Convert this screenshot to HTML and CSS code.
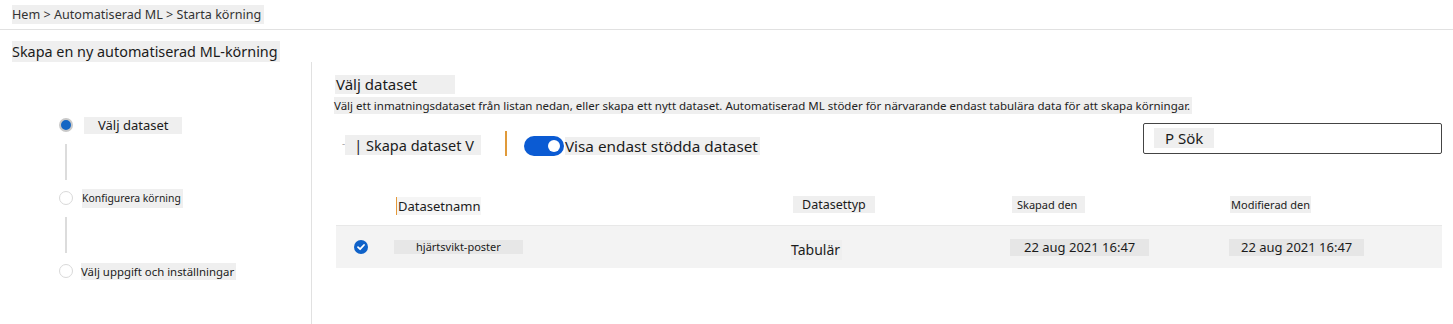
FILE: index.html
```html
<html><head>
<meta charset="utf-8">
<meta name="viewport" content="width=device-width, initial-scale=1">
<title>Starta körning - Automatiserad ML</title>
<link rel="stylesheet" href="styles.css">
</head>
<body>
  <header class="topbar">
    <span class="crumbs tx">Hem &gt; Automatiserad ML &gt; Starta körning</span>
  </header>

  <div class="page-title"><span class="tx">Skapa en ny automatiserad ML-körning</span></div>

  <div class="layout">
    <aside class="steps">
      <div class="step active">
        <span class="dot"></span>
        <span class="step-label first tx">Välj dataset</span>
      </div>
      <div class="connector"></div>
      <div class="step">
        <span class="dot"></span>
        <span class="step-label small tx">Konfigurera körning</span>
      </div>
      <div class="connector"></div>
      <div class="step">
        <span class="dot"></span>
        <span class="step-label tx">Välj uppgift och inställningar</span>
      </div>
    </aside>

    <main class="content">
      <h2 class="section-title tx">Välj dataset</h2>
      <p class="section-desc tx">Välj ett inmatningsdataset från listan nedan, eller skapa ett nytt dataset. Automatiserad ML stöder för närvarande endast tabulära data för att skapa körningar.</p>

      <div class="toolbar">
        <span class="dash">-</span>
        <span class="create tx">| Skapa dataset V</span>
        <span class="sep"></span>
        <span class="toggle"><span class="knob"></span></span>
        <span class="toggle-label tx">Visa endast stödda dataset</span>
        <div class="search"><span class="tx">P Sök</span></div>
      </div>

      <div class="table">
        <div class="row head">
          <div class="cell"></div>
          <div class="cell"><span class="col-name">Datasetnamn</span></div>
          <div class="cell"><span class="col-type tx">Datasettyp</span></div>
          <div class="cell"><span class="col-date tx">Skapad den</span></div>
          <div class="cell"><span class="col-mod tx">Modifierad den</span></div>
        </div>
        <div class="row selected">
          <div class="cell">
            <svg class="check" width="14" height="14" viewBox="0 0 14 14">
              <circle cx="7" cy="7" r="7" fill="#0f62c9"/>
              <path d="M4 7.2 L6.1 9.2 L10 5" fill="none" stroke="#fff" stroke-width="1.8" stroke-linecap="round" stroke-linejoin="round"/>
            </svg>
          </div>
          <div class="cell"><span class="ds-name">hjärtsvikt-poster</span></div>
          <div class="cell"><span class="ds-type tx">Tabulär</span></div>
          <div class="cell"><span class="ds-date first">22 aug 2021 16:47</span></div>
          <div class="cell"><span class="ds-date">22 aug 2021 16:47</span></div>
        </div>
      </div>
    </main>
  </div>
</body>
</html>
```

FILE: styles.css
```css
body, html {
  margin: 0;
  padding: 0;
  font-family: 'Noto Sans', 'Open Sans', sans-serif;
  background-color: #fff;
  color: #1b1b1b;
  overflow: hidden;
}
.tx {
  background-color: #efefef;
}
.topbar {
  height: 30px;
  box-sizing: border-box;
  padding: 5px 0 0 12px;
  border-bottom: 1px solid #e1e1e1;
}
.crumbs {
  display: inline-block;
  font-size: 12.6px;
  line-height: 19px;
  color: #333;
  padding-right: 3px;
}
.page-title {
  padding: 11px 0 0 12px;
}
.page-title .tx {
  display: inline-block;
  font-size: 14.4px;
  line-height: 21px;
  padding-right: 2px;
}
.layout {
  display: flex;
  height: 262px;
}
.steps {
  width: 312px;
  border-right: 1px solid #e1e1e1;
  padding: 53px 0 0 59px;
  box-sizing: border-box;
}
.step {
  display: flex;
  align-items: center;
  height: 20px;
}
.dot {
  width: 14px;
  height: 14px;
  border-radius: 50%;
  border: 1.5px solid #d9d9d9;
  box-sizing: border-box;
  background-color: #fff;
  flex-shrink: 0;
}
.step.active .dot {
  background-color: #1466c4;
  border: 2px solid #c9c9c9;
}
.step-label {
  font-size: 11.4px;
  line-height: 17px;
  margin-left: 8px;
  padding-right: 2px;
}
.step-label.first {
  font-size: 13px;
  margin-left: 11px;
  padding: 0 14px;
}
.step-label.small {
  font-size: 10.4px;
  line-height: 19px;
  margin-left: 9px;
}
.connector {
  width: 2px;
  height: 36px;
  margin: 9px 0 8px 6px;
  background-color: #dcdcdc;
}
.content {
  flex: 1;
  padding: 13px 11px 0 22px;
}
.section-title {
  display: block;
  width: fit-content;
  margin: 0 0 0 1px;
  font-size: 15px;
  font-weight: normal;
  line-height: 19px;
  padding: 0 38px 0 1px;
}
.section-desc {
  display: block;
  width: fit-content;
  margin: 3px 0 0;
  font-size: 11.5px;
  line-height: 17px;
  color: #222;
  padding-right: 2px;
}
.toolbar {
  display: flex;
  align-items: flex-end;
  height: 33px;
  margin-top: 9px;
}
.dash {
  font-size: 10px;
  color: #aaa;
  margin: 0 0 6px 8px;
}
.create {
  font-size: 14.5px;
  line-height: 20px;
  padding: 0 7px 0 9px;
  margin-bottom: 1px;
}
.sep {
  width: 2px;
  height: 25px;
  margin-left: 24px;
  background-color: #e09a3a;
}
.toggle {
  position: relative;
  width: 40px;
  height: 20px;
  border-radius: 10px;
  margin-left: 17px;
  background-color: #0b5bd3;
}
.knob {
  position: absolute;
  right: 4px;
  top: 4px;
  width: 12px;
  height: 12px;
  border-radius: 50%;
  background-color: #fff;
}
.toggle-label {
  font-size: 15.3px;
  line-height: 18px;
  margin: 0 0 1px 1px;
  padding-right: 2px;
}
.search {
  margin-left: auto;
  align-self: flex-start;
  width: 299px;
  height: 31px;
  box-sizing: border-box;
  border: 1px solid #444;
  border-radius: 2px;
  padding: 4px 0 0 10px;
}
.search .tx {
  display: inline-block;
  font-size: 15px;
  line-height: 20px;
  padding: 0 11px;
}
.table {
  margin: 34px 0 0 2px;
}
.row {
  display: grid;
  grid-template-columns: 53px 402px 219px 219px 1fr;
  align-items: center;
}
.row.head {
  height: 36px;
  box-sizing: border-box;
  padding-bottom: 6px;
  border-bottom: 1px solid #e8e8e8;
}
.row.selected {
  height: 42px;
  background-color: #f3f3f3;
}
.cell {
  display: flex;
  align-items: center;
}
.col-name {
  font-size: 13px;
  line-height: 18px;
  margin: 3px 0 0 7px;
  padding-left: 1px;
  border-left: 1px solid #e59a3a;
  background-color: #f5f5f5;
}
.col-type {
  font-size: 12.5px;
  line-height: 17px;
  padding: 0 9px;
  margin-left: 2px;
}
.col-date {
  font-size: 11px;
  line-height: 17px;
  margin-left: 2px;
  padding: 0 8px 0 5px;
}
.col-mod {
  font-size: 11px;
  line-height: 17px;
  margin-left: 1px;
  padding: 0 1px;
}
.check {
  margin-left: 18px;
}
.ds-name {
  font-size: 11px;
  line-height: 14px;
  padding: 0 22px;
  margin-left: 5px;
  background-color: #e7e7e7;
}
.ds-type {
  font-size: 14px;
  line-height: 20px;
  margin-top: 6px;
  padding-right: 2px;
  background-color: #efefef;
}
.ds-date {
  font-size: 13px;
  line-height: 17px;
  padding: 0 12px;
  margin-left: 0;
  background-color: #e6e6e6;
}
.ds-date.first {
  padding: 0 14px;
}
```
